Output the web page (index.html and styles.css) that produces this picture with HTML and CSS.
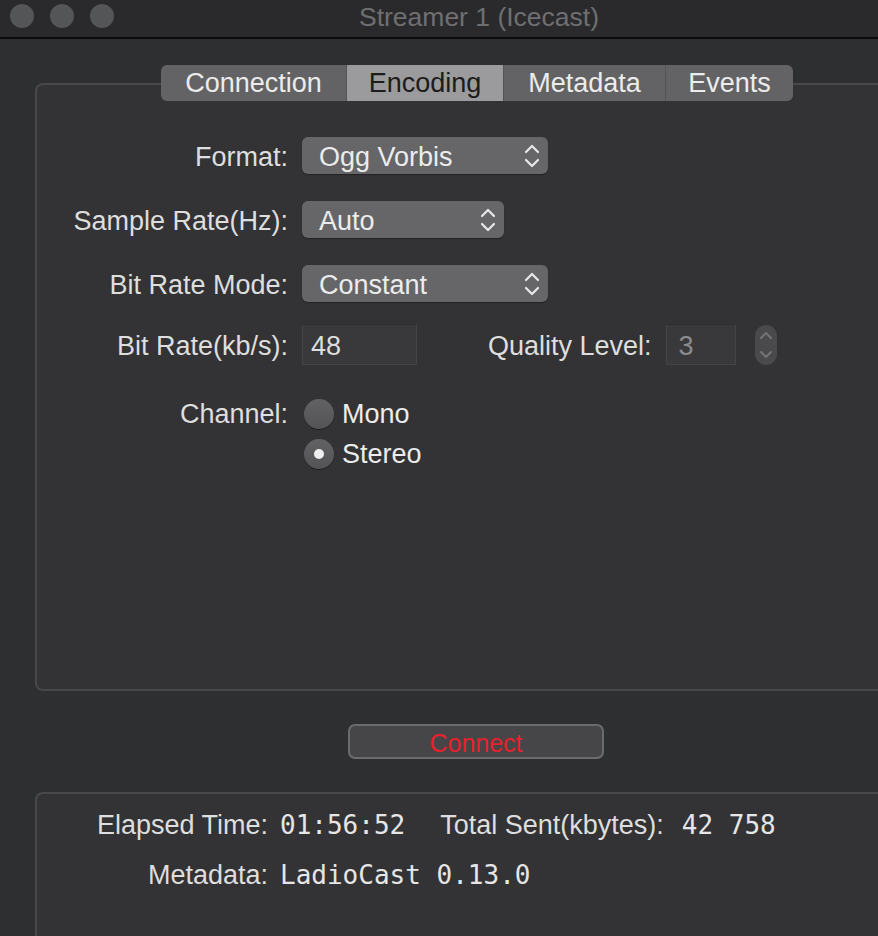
FILE: index.html
```html
<!DOCTYPE html>
<html>
<head>
<meta charset="utf-8">
<title>Streamer 1 (Icecast)</title>
<link rel="stylesheet" href="styles.css">
</head>
<body>

<div class="window">
<div class="titlebar">
	<div class="lights">
		<span class="light"></span>
		<span class="light"></span>
		<span class="light"></span>
	</div>
	<div class="title">Streamer 1 (Icecast)</div>
</div>

<div class="content">
<div class="tabbox">
	<div class="tabs">
		<div class="tab">Connection</div>
		<div class="tab selected">Encoding</div>
		<div class="tab">Metadata</div>
		<div class="tab last">Events</div>
	</div>

	<div class="form">
		<div class="row popup-row">
			<label>Format:</label>
			<div class="popup wide">Ogg Vorbis
				<svg class="chev" width="16" height="26" viewBox="0 0 16 26"><path d="M2 9 L8 3 L14 9 M2 17 L8 23 L14 17" fill="none" stroke="#e8e8e8" stroke-width="2.2" stroke-linecap="round" stroke-linejoin="round"/></svg>
			</div>
		</div>
		<div class="row popup-row">
			<label>Sample Rate(Hz):</label>
			<div class="popup narrow">Auto
				<svg class="chev" width="16" height="26" viewBox="0 0 16 26"><path d="M2 9 L8 3 L14 9 M2 17 L8 23 L14 17" fill="none" stroke="#e8e8e8" stroke-width="2.2" stroke-linecap="round" stroke-linejoin="round"/></svg>
			</div>
		</div>
		<div class="row popup-row">
			<label>Bit Rate Mode:</label>
			<div class="popup wide">Constant
				<svg class="chev" width="16" height="26" viewBox="0 0 16 26"><path d="M2 9 L8 3 L14 9 M2 17 L8 23 L14 17" fill="none" stroke="#e8e8e8" stroke-width="2.2" stroke-linecap="round" stroke-linejoin="round"/></svg>
			</div>
		</div>
		<div class="row field-row">
			<label>Bit Rate(kb/s):</label>
			<div class="field bitrate">48</div>
			<label class="quality-label">Quality Level:</label>
			<div class="field quality">3</div>
			<div class="stepper">
				<svg width="22" height="40" viewBox="0 0 22 40"><path d="M6 13 L11 8 L16 13 M6 27 L11 32 L16 27" fill="none" stroke="#747476" stroke-width="2" stroke-linecap="round" stroke-linejoin="round"/></svg>
			</div>
		</div>
		<div class="row radio-row">
			<label>Channel:</label>
			<div class="radios">
				<div class="radio-item"><span class="radio"></span>Mono</div>
				<div class="radio-item"><span class="radio checked"></span>Stereo</div>
			</div>
		</div>
	</div>
</div>

<div class="actions">
	<div class="button">Connect</div>
</div>

<div class="statusbox">
	<div class="status-row">
		<span class="slabel first">Elapsed Time:</span>
		<span class="mono">01:56:52</span>
		<span class="slabel sent">Total Sent(kbytes):</span>
		<span class="mono">42 758</span>
	</div>
	<div class="status-row">
		<span class="slabel first">Metadata:</span>
		<span class="mono">LadioCast 0.13.0</span>
	</div>
</div>
</div>
</div>

</body>
</html>
```

FILE: styles.css
```css
html, body {
	margin: 0;
	padding: 0;
}
body {
	background-color: #2e2f31;
	font-family: "Liberation Sans", Arial, sans-serif;
	font-size: 27px;
	color: #dedede;
	width: 878px;
	height: 936px;
	overflow: hidden;
}
.titlebar {
	height: 37px;
	background-color: #2a2a2c;
	border-bottom: 2px solid #0c0c0c;
	position: relative;
	display: flex;
	align-items: center;
	justify-content: center;
}
.lights {
	position: absolute;
	left: 10px;
	top: 4px;
	display: flex;
	gap: 16px;
}
.light {
	display: block;
	width: 24px;
	height: 24px;
	border-radius: 50%;
	background-color: #545557;
}
.title {
	color: #6f6f71;
	font-size: 26.5px;
	margin-left: 80px;
	margin-top: -3px;
}
.content {
	padding-left: 35px;
}
.tabbox {
	margin-top: 44px;
	height: 604px;
	background-color: #333335;
	border: 2px solid #48484b;
	border-right: none;
	border-radius: 8px 0 0 8px;
}
.tabs {
	display: flex;
	margin-top: -20px;
	margin-left: 124px;
	width: 632px;
	height: 36px;
	border-radius: 6px;
	overflow: hidden;
	background-color: #636365;
}
.tab {
	height: 36px;
	line-height: 37px;
	text-align: center;
	color: #ececec;
	border-right: 1px solid #545456;
}
.tab:nth-child(1) { width: 185px; }
.tab:nth-child(2) { width: 156px; }
.tab:nth-child(3) { width: 161px; }
.tab:nth-child(4) { width: 127px; }
.tab.last {
	border-right: none;
}
.tab.selected {
	background-color: #9b9b9d;
	color: #1c1c1c;
}
.form {
	padding-top: 36px;
}
.row {
	display: flex;
	align-items: center;
}
.row label {
	width: 251px;
	text-align: right;
	margin-right: 14px;
	flex: none;
}
.popup-row {
	height: 37px;
	margin-bottom: 27px;
}
.popup-row label {
	padding-top: 3px;
}
.popup {
	height: 37px;
	line-height: 40px;
	background-color: #666668;
	border-radius: 6px;
	padding-left: 17px;
	box-sizing: border-box;
	position: relative;
	color: #ececec;
	box-shadow: 0 1px 1px rgba(0,0,0,0.35);
}
.popup.wide { width: 246px; }
.popup.narrow { width: 202px; }
.chev {
	position: absolute;
	right: 8px;
	top: 6px;
}
.field-row {
	height: 41px;
	margin-top: -5px;
}
.field-row label {
	padding-top: 3px;
}
.field {
	height: 41px;
	line-height: 43px;
	box-sizing: border-box;
	background-color: #39393b;
	border: 1px solid #444446;
	border-top-color: #2c2c2e;
	padding-left: 8px;
}
.bitrate {
	width: 115px;
}
.row label.quality-label {
	width: auto;
	margin-left: 71px;
}
.quality {
	width: 70px;
	color: #8c8c8e;
	padding-left: 12px;
}
.stepper {
	width: 22px;
	height: 40px;
	margin-left: 19px;
	border-radius: 11px;
	background-color: #4a4a4c;
}
.stepper svg {
	display: block;
}
.radio-row {
	align-items: flex-start;
	margin-top: 34px;
}
.radio-row label {
	line-height: 30px;
}
.radios {
	display: flex;
	flex-direction: column;
	gap: 10px;
}
.radio-item {
	display: flex;
	align-items: center;
	gap: 8px;
	line-height: 30px;
	color: #ececec;
}
.radio {
	display: block;
	width: 30px;
	height: 30px;
	border-radius: 50%;
	background: linear-gradient(#626264, #545456);
	margin-left: 2px;
	position: relative;
	box-shadow: 0 1px 1px rgba(0,0,0,0.4);
}
.radio.checked::after {
	content: "";
	position: absolute;
	left: 10px;
	top: 10px;
	width: 10px;
	height: 10px;
	border-radius: 50%;
	background-color: #f0f0f0;
}
.actions {
	display: flex;
	padding-left: 313px;
	padding-top: 33px;
	padding-bottom: 33px;
}
.button {
	width: 256px;
	height: 35px;
	box-sizing: border-box;
	border: 2px solid #6c6c6e;
	border-radius: 7px;
	background-color: #464648;
	color: #e8202c;
	text-align: center;
	line-height: 34px;
	font-size: 25px;
}
.statusbox {
	height: 144px;
	background-color: #333335;
	border: 2px solid #48484b;
	border-right: none;
	border-bottom: none;
	border-radius: 8px 0 0 0;
	padding-top: 16px;
	box-sizing: border-box;
}
.status-row {
	display: flex;
	align-items: baseline;
	height: 50px;
}
.slabel.first {
	width: 231px;
	text-align: right;
	margin-right: 12px;
}
.slabel.sent {
	margin-left: 35px;
	margin-right: 18px;
}
.mono {
	font-family: "DejaVu Sans Mono", "Liberation Mono", monospace;
	font-size: 26px;
	color: #e6e6e6;
}
```
